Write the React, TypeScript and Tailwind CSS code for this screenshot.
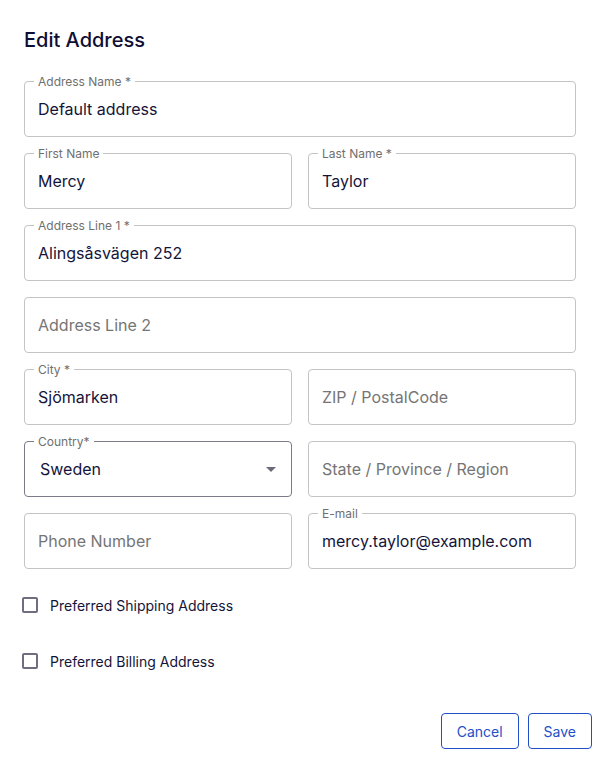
import React from "react";

interface FieldProps {
  label?: string;
  required?: boolean;
  value?: string;
  placeholder?: string;
}

const Field = ({ label, required, value, placeholder }: FieldProps) => {
  return (
    <div className="relative h-[56px] rounded border border-[#c4c4c4]">
      {label && (
        <span className="absolute -top-[7px] left-[9px] bg-white px-[4px] text-[12px] leading-[14px] text-[#6f6f6f]">
          {label}
          {required && " *"}
        </span>
      )}
      <input
        className="h-full w-full bg-transparent px-[13px] text-[16px] text-[#14143a] outline-none placeholder:text-[#757575]"
        defaultValue={value}
        placeholder={placeholder}
        readOnly
      />
    </div>
  );
};

const CountrySelect = () => {
  return (
    <div className="relative flex h-[56px] items-center justify-between rounded border border-[#7b7b8a] pl-[15px] pr-[14px]">
      <span className="absolute -top-[7px] left-[9px] bg-white px-[4px] text-[12px] leading-[14px] text-[#6f6f6f]">
        Country*
      </span>
      <span className="text-[16px] text-[#14143a]">Sweden</span>
      <svg width="10" height="5" viewBox="0 0 10 5" className="mr-[1px]">
        <path d="M0 0h10L5 5z" fill="#6b6b78" />
      </svg>
    </div>
  );
};

const Check = ({ label }: { label: string }) => {
  return (
    <label className="flex h-[42px] items-center gap-[12px] pl-[22px]">
      <span className="h-[16px] w-[16px] rounded-[2px] border-2 border-[#6e6e80]" />
      <span className="text-[14px] text-[#14143a]">{label}</span>
    </label>
  );
};

const App = () => {
  return (
    <div
      className="min-h-[757px] w-[600px] bg-white"
      style={{ fontFamily: "Inter, 'Noto Sans', sans-serif" }}
    >
      <div className="px-6 pt-[28px]">
        <h2 className="text-[20px] font-medium leading-[24px] text-[#0e0e34]">
          Edit Address
        </h2>
        <div className="mt-[29px] flex flex-col gap-4">
          <Field label="Address Name" required value="Default address" />
          <div className="grid grid-cols-2 gap-4">
            <Field label="First Name" value="Mercy" />
            <Field label="Last Name" required value="Taylor" />
          </div>
          <Field label="Address Line 1" required value="Alingsåsvägen 252" />
          <Field placeholder="Address Line 2" />
          <div className="grid grid-cols-2 gap-4">
            <Field label="City" required value="Sjömarken" />
            <Field placeholder="ZIP / PostalCode" />
          </div>
          <div className="grid grid-cols-2 gap-4">
            <CountrySelect />
            <Field placeholder="State / Province / Region" />
          </div>
          <div className="grid grid-cols-2 gap-4">
            <Field placeholder="Phone Number" />
            <Field label="E-mail" value="mercy.taylor@example.com" />
          </div>
        </div>
      </div>
      <div className="mt-[15px] flex flex-col gap-[14px]">
        <Check label="Preferred Shipping Address" />
        <Check label="Preferred Billing Address" />
      </div>
      <div className="mt-[31px] flex justify-end gap-[9px] pr-[8px]">
        <button className="h-[36px] rounded border border-[#1f4fc4] px-[15px] text-[14px] text-[#2150c8]">
          Cancel
        </button>
        <button className="h-[36px] rounded border border-[#1f4fc4] px-[15px] text-[14px] text-[#2150c8]">
          Save
        </button>
      </div>
    </div>
  );
};

export default App;
